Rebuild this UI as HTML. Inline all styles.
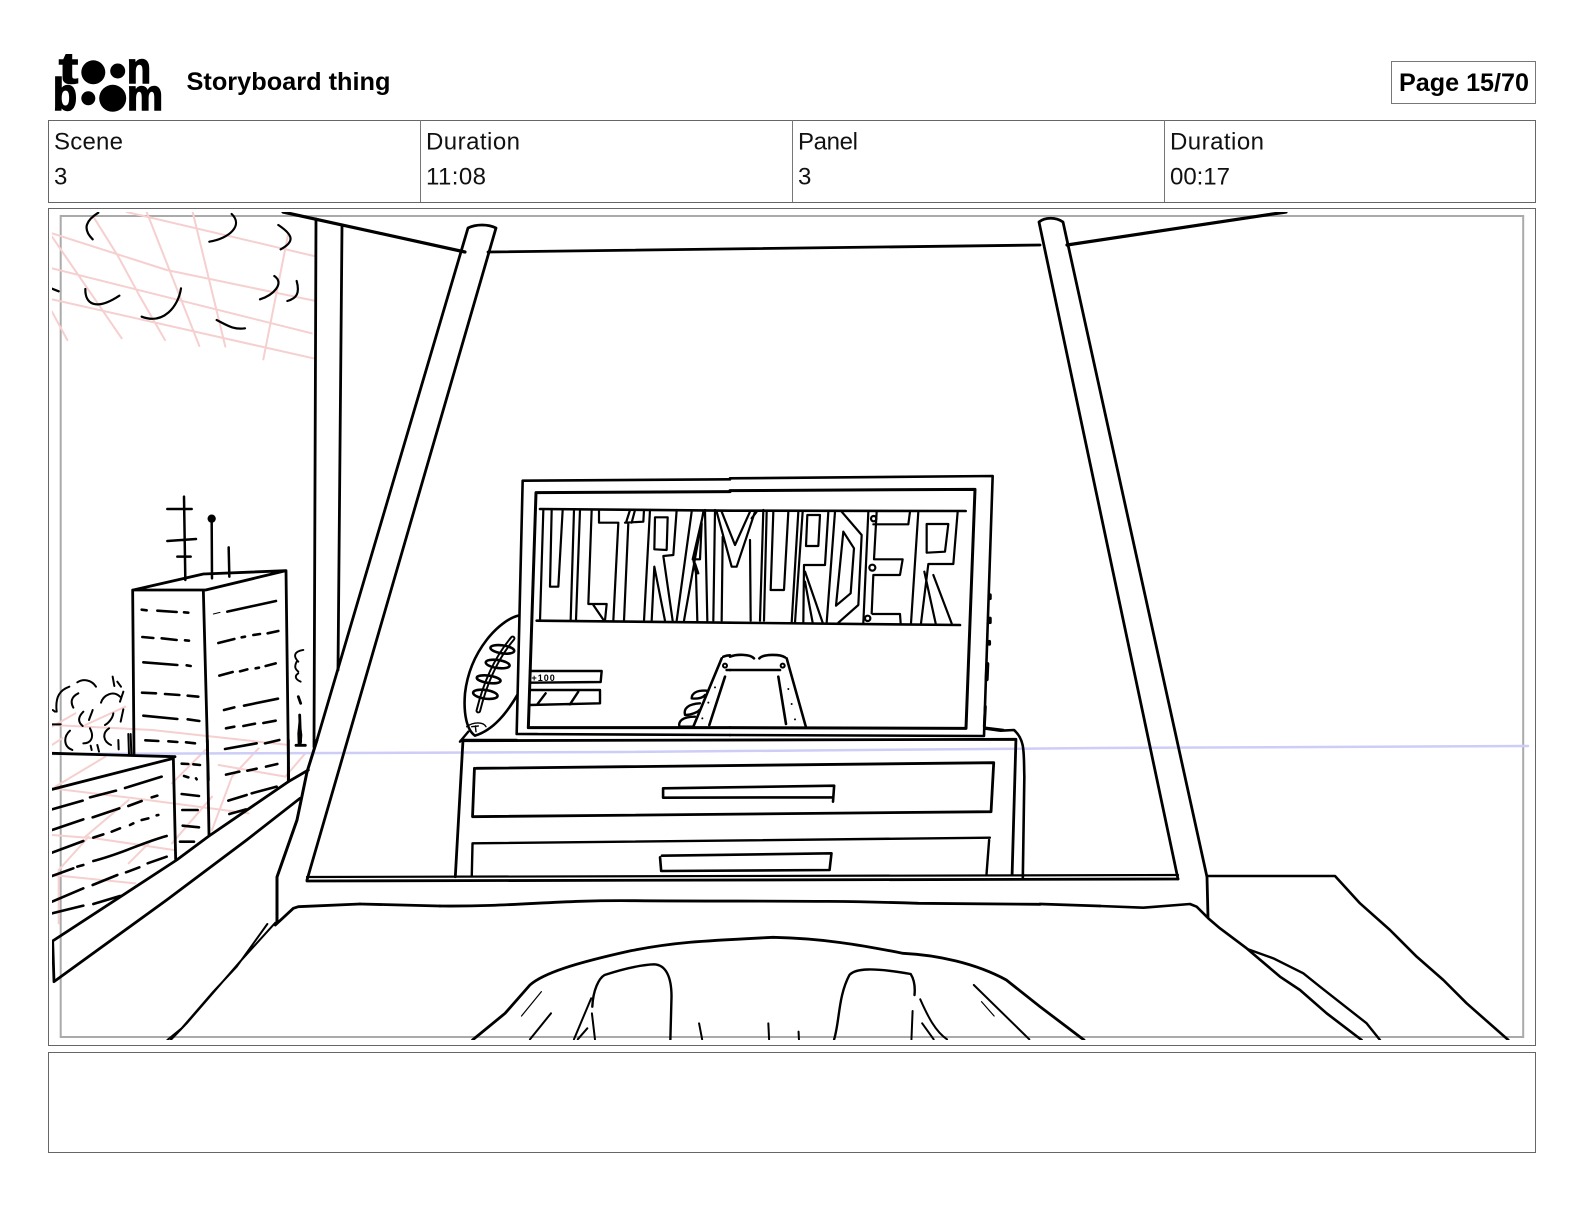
<!DOCTYPE html>
<html lang="en">
<head>
<meta charset="utf-8">
<title>Storyboard thing</title>
<style>
html,body{margin:0;padding:0;background:#fff;width:1584px;height:1224px;overflow:hidden}
svg{display:block;position:absolute;left:0;top:0}
svg *{vector-effect:non-scaling-stroke}
text{font-family:"Liberation Sans",sans-serif;fill:#111;stroke:none}
.b{font-weight:700;font-size:25px;fill:#000}
.r{font-size:24px}
.k path,.k ellipse,.k circle{fill:none;stroke:#000;stroke-linecap:round;stroke-linejoin:round}
.k .p path{stroke:#f6cfcf}
</style>
</head>
<body>
<svg width="1584" height="1224" viewBox="0 0 1584 1224" xmlns="http://www.w3.org/2000/svg">
<defs><clipPath id="art"><rect x="52" y="212" width="1480" height="828"/></clipPath></defs>
<rect width="1584" height="1224" fill="#fff"/>

<!-- logo -->
<g fill="#000">
<text x="59" y="83" font-size="44" font-weight="700" textLength="19" lengthAdjust="spacingAndGlyphs" style="stroke:#000;stroke-width:1.5px;fill:#000">t</text>
<circle cx="93.3" cy="72.3" r="12"/><circle cx="117.7" cy="71" r="7.5"/>
<text x="127" y="83" font-size="44" font-weight="700" textLength="24" lengthAdjust="spacingAndGlyphs" style="stroke:#000;stroke-width:1.5px;fill:#000">n</text>
<text x="53" y="110" font-size="45" font-weight="700" textLength="24" lengthAdjust="spacingAndGlyphs" style="stroke:#000;stroke-width:1.5px;fill:#000">b</text>
<circle cx="88.3" cy="98.3" r="7"/><circle cx="112.7" cy="98.3" r="13.5"/>
<text x="127" y="110" font-size="44" font-weight="700" textLength="36" lengthAdjust="spacingAndGlyphs" style="stroke:#000;stroke-width:1.5px;fill:#000">m</text>
</g>

<text class="b" x="186.5" y="90" textLength="204" lengthAdjust="spacingAndGlyphs">Storyboard thing</text>

<rect x="1391.5" y="61.5" width="144" height="42" fill="none" stroke="#777" stroke-width="1"/>
<text class="b" x="1399" y="91" textLength="130" lengthAdjust="spacingAndGlyphs">Page 15/70</text>

<!-- info table -->
<rect x="48.5" y="120.5" width="1487" height="82" fill="none" stroke="#666" stroke-width="1"/>
<path d="M420.5 120V202M792.5 120V202M1164.5 120V202" stroke="#777" stroke-width="1" fill="none"/>
<text class="r" x="54" y="149.5" textLength="69">Scene</text>
<text class="r" x="54" y="184.5" textLength="14">3</text>
<text class="r" x="426" y="149.5" textLength="94">Duration</text>
<text class="r" x="426" y="184.5" textLength="60">11:08</text>
<text class="r" x="798" y="149.5" textLength="60">Panel</text>
<text class="r" x="798" y="184.5" textLength="14">3</text>
<text class="r" x="1170" y="149.5" textLength="94">Duration</text>
<text class="r" x="1170" y="184.5" textLength="60">00:17</text>

<!-- frames -->
<rect x="48.5" y="208.5" width="1487" height="837" fill="none" stroke="#666" stroke-width="1"/>
<rect x="48.5" y="1052.5" width="1487" height="100" fill="none" stroke="#666" stroke-width="1"/>

<rect x="60.7" y="216" width="1462.5" height="821" fill="none" stroke="#aaa" stroke-width="2"/>

<g clip-path="url(#art)" class="k">

<!-- pink construction: ceiling -->
<g class="p" transform="translate(40 200) scale(.33333)" stroke-width="2">
<path d="M36 100L380 210L822 302M260 36L822 168M36 205L815 400M36 298L820 475M160 50L235 170L300 290L375 420M320 36L478 438M458 36L556 440M745 100L670 478M36 110L245 415M36 335L82 420"/>
</g>
<!-- pink construction: lower left -->
<g class="p" transform="translate(52 720) scale(.33333)" stroke-width="2">
<path d="M0 15L300 30L710 75M0 75L30 55M0 205L250 235L590 280M0 345L130 355L365 390M0 465L250 490M160 110L10 200M460 90L360 190M620 85L540 170L480 330M760 100L700 170M480 230L360 370M300 360L230 430M110 350L20 450L20 610M230 240L100 350M500 135L700 170M70 -20L0 20M220 -40L100 15"/>
</g>

<!-- blue horizon -->
<path d="M52 754L620 752L1100 748L1528 746" style="stroke:#cdcdf7;stroke-width:2.5px"/>

<!-- ceiling strokes -->
<g transform="translate(40 200) scale(.33333)" stroke-width="2.2">
<path d="M175 38C140 60 125 85 158 118M575 42C610 75 570 115 508 125M715 75C760 105 765 125 722 148M703 228C735 250 700 285 660 298M770 243C780 280 770 295 742 303M36 266L56 274M136 267C135 310 165 335 238 287M423 265C415 320 370 375 305 350M530 360C560 375 580 390 615 385"/>
</g>
<path d="M316 219L314 747M342 227L338 670" stroke-width="2.8"/>
<path d="M283 212L465 252" stroke-width="3.2"/>

<!-- tower -->
<g transform="translate(40 480) scale(.33333)">
<path stroke-width="2.8" d="M280 330L490 282L738 272L497 330L280 330M278 330L282 825M490 330L505 900M738 272L746 900"/>
<path stroke-width="2.5" d="M432 50L436 300M382 87L455 87M382 183L468 177M412 230L452 230M515 115L516 295M566 202L568 290"/>
<circle cx="515" cy="116" r="11" style="fill:#000"/>
<path stroke-width="2.6" d="M305 389L320 391M352 392L410 396M432 397L445 398M307 471L340 474M365 475L410 480M435 481L447 482M310 547L412 555M440 556L452 558M306 638L348 640M375 642L418 645M443 647L475 650M310 707L412 717M443 718L478 723M316 781L355 783M385 784L412 786M438 787L465 790"/>
<path stroke-width="2.6" d="M562 395L708 363M535 489L583 477M605 472L615 470M640 465L660 462M683 460L715 453M538 587L578 576M600 574L622 568M647 565L657 563M677 558L707 550M552 690L583 682M612 677L714 656M558 745L583 740M610 738L645 731M670 729L707 722M555 807L650 790M675 790L718 780"/>
<path stroke-width="1" d="M520 402L540 397"/>
<path stroke-width="1.9" d="M790 510C760 515 760 530 775 545M770 545C760 565 770 570 775 575M775 580C760 590 770 600 782 605"/>
<path stroke-width="2.8" d="M775 650L782 670M779 705L782 785M768 796L796 796"/>
<path d="M778 700L787 765L785 792L773 792L772 760Z" style="fill:#000;stroke:none"/>
<!-- bushes -->
<path stroke-width="2" d="M88 620C60 630 45 650 50 695M112 607C130 595 155 600 168 620M115 640C95 650 90 665 100 683M130 695C115 710 112 725 128 738M158 690C155 700 150 710 147 720M218 590L223 618M232 605L243 620M183 668C190 645 220 630 240 650M250 635L240 665M220 700C218 715 205 730 195 735M250 688L242 725M90 752C70 770 70 800 97 810M150 745C165 775 150 790 130 790M207 745C185 760 190 785 213 795M152 797L155 810M172 795L177 815M235 780L236 808M265 762L267 825M272 762L274 825M38 690L45 695M36 733L62 733"/>
</g>

<!-- low building + railing + left pillar -->
<g transform="translate(40 740) scale(.33333)">
<path stroke-width="2.8" d="M36 40L405 50M36 148L400 55M400 52L407 358M502 0L507 285M745 0L745 125"/>
<path stroke-width="2.8" d="M38 603L410 360L507 288L745 125L805 90M38 603L42 725L380 480L620 300L780 175"/>
<path stroke-width="2.6" d="M36 208L128 182M150 172L228 152M255 144L365 110M36 270L130 238M158 232L238 205M265 198L305 183M335 172L352 167M36 338L130 303M160 293L190 283M215 275L240 265M270 255L280 250M305 240L325 235M350 226L355 225M36 408L100 385M112 380L130 375M160 363C250 340 300 310 380 288M36 485L130 445M158 435L232 405M258 397L298 382M323 370L380 350M36 520L130 497M160 492L240 468M425 71L445 72M460 73L480 75M432 108L445 112M468 115L470 118M425 162L477 168M427 210L473 210M428 257L477 262M420 305L462 305M558 104L598 95M622 92L650 86M678 80L712 72M565 182L620 165M635 160L710 140M568 222L618 208"/>
<path stroke-width="2" d="M706 548L600 665L440 850L392 900M682 552L590 680L520 755L425 865L382 900"/>
<path stroke-width="2.8" d="M706 555L760 505L775 500L960 492"/>
</g>

<!-- window pillars -->
<path stroke-width="2.8" d="M317 740L468 228C476 224 488 224 496 228L307 880"/>
<path stroke-width="3" d="M317 740L307 772L297 820L277 877L277 922"/>
<path stroke-width="2.8" d="M488 252L1040 245"/>
<path stroke-width="2.8" d="M1178 879L1039 222C1045 217 1056 217 1063 222L1207 877L1208 917"/>
<path stroke-width="3.2" d="M1067 245L1286 212"/>
<path stroke-width="2.2" d="M307 877L1178 875"/>
<path stroke-width="2.8" d="M307 881L1178 879"/>
<!-- bonnet joins -->
<path stroke-width="2.8" d="M360 904L440 906M1040 904L1100 906"/>

<!-- football -->
<g transform="translate(450 460) scale(.33333)">
<path stroke-width="2.6" d="M205 467C150 480 60 570 45 700C40 760 50 810 75 827C130 810 170 760 205 700"/>
<path stroke-width="1.4" d="M50 800C70 785 100 785 108 800M65 800L85 798M76 798L78 815"/>
<path stroke-width="5.5" d="M188 535C150 580 110 650 85 752"/>
<path d="M188 535C150 580 110 650 85 752" style="stroke:#fff;stroke-width:1.6px"/>
<ellipse cx="157" cy="568" rx="36" ry="12" transform="rotate(8 157 568)" stroke-width="2.6"/>
<ellipse cx="143" cy="612" rx="36" ry="12" transform="rotate(8 143 612)" stroke-width="2.6"/>
<ellipse cx="116" cy="658" rx="36" ry="11" transform="rotate(8 116 658)" stroke-width="2.6"/>
<ellipse cx="106" cy="703" rx="37" ry="13" transform="rotate(8 106 703)" stroke-width="2.6"/>
</g>

<!-- dresser -->
<g transform="translate(440 720) scale(.38267 .33333)">
<path stroke-width="2.8" d="M55 62L1505 58M60 62L40 470M1505 60L1495 465"/>
<path stroke-width="2.6" d="M1527 170L1523 475M1420 25L1465 32L1500 30C1530 60 1525 100 1527 170"/>
<path stroke-width="2.8" d="M95 145L1447 128L1440 275L85 290L90 145"/>
<path stroke-width="2.6" d="M583 205L1030 197L1027 245M585 233L1027 232M583 205L583 233"/>
<path stroke-width="2.4" d="M85 370L1437 353M85 370L83 468M1435 360L1428 465"/>
<path stroke-width="2.6" d="M580 407L1023 400L1018 450L578 453L575 412"/>
<path stroke-width="2.8" d="M0 558C200 560 300 540 500 542C800 545 1000 540 1250 550L1568 553"/>
<path stroke-width="2.8" d="M85 960L170 880L235 795C270 760 350 730 500 692C620 665 700 662 870 652C1000 655 1100 675 1210 700C1300 705 1400 730 1480 780L1568 860L1683 960"/>
<path stroke-width="1.2" d="M213 888L265 815M1415 845L1448 888"/>
<path stroke-width="2" d="M235 958L290 880M350 958L395 835M360 958L385 925M405 958L397 880M1395 795L1540 958M677 910L685 958M858 910L860 958M937 935L938 958M1255 838C1275 890 1295 935 1325 958M1260 910L1290 958M1235 873L1232 958"/>
<path stroke-width="2.4" d="M398 860C400 810 415 775 430 765C470 750 520 735 560 733C590 735 605 770 605 830L602 958M1030 958C1045 900 1040 830 1070 765C1085 745 1130 742 1230 762C1240 780 1242 800 1240 825"/>
</g>

<!-- right side: bonnet, table -->
<g transform="translate(1100 720) scale(.33333)">
<path stroke-width="2.6" d="M0 558L130 563L270 552L290 560L325 595L360 625L440 685L540 770L600 810L680 880L785 960"/>
<path stroke-width="2.4" d="M445 688L520 715L610 760L660 800L800 910L840 960"/>
<path stroke-width="2.6" d="M325 468L705 468L780 550L870 630L950 710L1030 780L1100 850L1225 960"/>
</g>

<!-- TV left half -->
<path d="M522 481L993 476L984 736L517 734Z" style="fill:#fff;stroke:none"/>
<g transform="translate(450 460) scale(.33333)">
<path stroke-width="2.6" d="M262 822L200 822L218 62L840 58M200 822L840 825"/>
<path stroke-width="3" d="M840 95L258 98L235 803L840 803"/>
<path stroke-width="2.6" d="M270 147L840 152M260 482L840 488"/>
<path stroke-width="2.2" d="M280 150L270 482M305 150L300 380L325 380L338 150M372 150L362 480M390 150L378 480M425 150L415 432L470 432L465 482M430 435L462 482M447 150L447 188L505 188L490 482M525 188L580 185L582 150M535 188L522 482M540 150L528 188M555 150L545 188"/>
<path stroke-width="2.4" d="M240 633L455 633L452 666L240 668M240 690L450 690L450 730L238 735M287 700L262 733M385 695L360 733"/>
<path stroke-width="2.4" d="M35 840L200 840M30 845L55 815"/>
<path stroke-width="2.6" d="M820 590C830 586 835 586 840 586M815 595L730 800M825 650L778 795M830 630L840 630"/>
<circle cx="825" cy="617" r="6" stroke-width="2"/>
<circle cx="795" cy="682" r="3" style="fill:#000;stroke:none"/><circle cx="775" cy="728" r="3" style="fill:#000;stroke:none"/><circle cx="757" cy="775" r="3" style="fill:#000;stroke:none"/>
<path stroke-width="2.4" d="M770 692C740 690 725 700 725 715C745 718 760 712 765 705M750 730C715 732 700 745 705 765C725 765 745 755 748 750M735 770C695 770 685 785 688 800L730 800"/>
</g>
<text x="531.5" y="681" style="font-size:9px;letter-spacing:1px;font-weight:700;fill:#000">+100</text>

<!-- title letters: R A M U -->
<g transform="translate(620 500) scale(.33333)" stroke-width="2.2">
<path d="M90 30L72 362M105 52L143 52L140 150L103 148L105 52M170 30L160 165L130 168M103 200L95 362M103 200L135 362M130 168L158 362"/>
<path d="M215 35L170 362M250 35L192 362M250 40L218 178L240 178L245 70M220 180L228 220L235 220L225 190M228 220L232 362M255 30L262 362"/>
<path d="M285 30L280 362M290 35L335 200L350 200L405 35M305 35L345 135L390 35M308 110L305 362M390 120L392 362M430 30L420 362M395 55L410 35"/>
<path d="M440 35L432 362M460 35L452 270L492 270L505 35"/>
</g>

<!-- TV right half -->
<g transform="translate(730 460) scale(.33333)">
<path stroke-width="2.6" d="M0 55L788 48L762 828L0 825"/>
<path stroke-width="3" d="M0 92L735 88L708 805L0 803"/>
<path stroke-width="2.6" d="M0 152L707 153M0 488L690 495"/>
<path stroke-width="2.2" d="M205 155L185 488M218 155L195 488M232 165L270 165L265 258L228 258L232 165M295 155L285 315L222 315L220 488M225 335L278 488M225 365L248 488M315 155L290 488M335 155L395 225L385 435L325 488M340 215L372 265L362 400L318 437L340 215M415 155L400 488M440 155L432 298L518 298L510 345L430 345L425 460M430 193L535 193L540 155M428 462L510 462L512 490M565 155L543 490M590 192L655 192L645 275L590 278L590 192M683 155L670 312L595 312L573 490M583 335L617 490M610 345L665 490"/>
<circle cx="431" cy="176" r="8" stroke-width="2.2"/><circle cx="427" cy="323" r="9" stroke-width="2.2"/><circle cx="413" cy="475" r="8" stroke-width="2.2"/>
<path stroke-width="2.6" d="M0 590C20 582 60 582 72 595M88 595C100 582 150 582 165 592M0 630L150 630M170 595L228 802M145 650L168 792"/>
<circle cx="158" cy="617" r="6" stroke-width="2"/>
<circle cx="175" cy="687" r="3" style="fill:#000;stroke:none"/><circle cx="185" cy="732" r="3" style="fill:#000;stroke:none"/><circle cx="195" cy="778" r="3" style="fill:#000;stroke:none"/>
<path stroke-width="3.5" d="M780 405L780 415M780 475L780 487M778 545L778 552"/>
<path stroke-width="4" d="M772 612L770 658"/>
<path stroke-width="3" d="M766 740L763 800"/>
<path stroke-width="2.4" d="M765 803L820 810"/>
</g>
</g>
</svg>
</body>
</html>
